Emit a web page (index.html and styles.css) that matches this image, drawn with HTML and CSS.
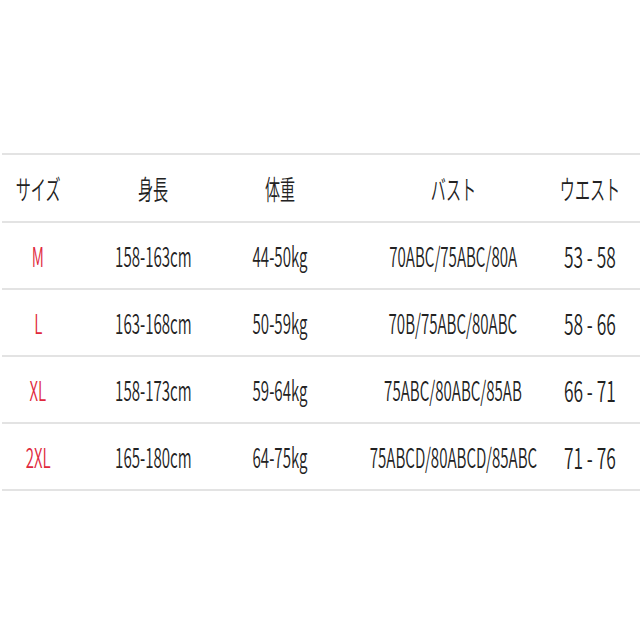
FILE: index.html
```html
<!DOCTYPE html>
<html lang="ja">
<head>
<meta charset="utf-8">
<title>サイズ表</title>
<link rel="stylesheet" href="styles.css">
</head>
<body>
<div class="size-table">
  <div class="row head">
    <div class="cell"><span class="txt">サイズ</span></div>
    <div class="cell"><span class="txt">身長</span></div>
    <div class="cell"><span class="txt">体重</span></div>
    <div class="cell"><span class="txt">バスト</span></div>
    <div class="cell"><span class="txt">ウエスト</span></div>
    <div class="cell"></div>
  </div>
  <div class="row">
    <div class="cell"><span class="txt size">M</span></div>
    <div class="cell"><span class="txt">158-163cm</span></div>
    <div class="cell"><span class="txt">44-50kg</span></div>
    <div class="cell"><span class="txt bust">70ABC/75ABC/80A</span></div>
    <div class="cell"><span class="txt waist">53 - 58</span></div>
    <div class="cell"></div>
  </div>
  <div class="row">
    <div class="cell"><span class="txt size">L</span></div>
    <div class="cell"><span class="txt">163-168cm</span></div>
    <div class="cell"><span class="txt">50-59kg</span></div>
    <div class="cell"><span class="txt bust">70B/75ABC/80ABC</span></div>
    <div class="cell"><span class="txt waist">58 - 66</span></div>
    <div class="cell"></div>
  </div>
  <div class="row">
    <div class="cell"><span class="txt size">XL</span></div>
    <div class="cell"><span class="txt">158-173cm</span></div>
    <div class="cell"><span class="txt">59-64kg</span></div>
    <div class="cell"><span class="txt bust">75ABC/80ABC/85AB</span></div>
    <div class="cell"><span class="txt waist">66 - 71</span></div>
    <div class="cell"></div>
  </div>
  <div class="row last">
    <div class="cell"><span class="txt size">2XL</span></div>
    <div class="cell"><span class="txt">165-180cm</span></div>
    <div class="cell"><span class="txt">64-75kg</span></div>
    <div class="cell"><span class="txt bust">75ABCD/80ABCD/85ABC</span></div>
    <div class="cell"><span class="txt waist">71 - 76</span></div>
    <div class="cell"></div>
  </div>
</div>
</body>
</html>
```
FILE: styles.css
```css
html, body {
  margin: 0;
  padding: 0;
  background: #ffffff;
}
body {
  width: 640px;
  height: 640px;
  overflow: hidden;
  font-family: "Noto Sans CJK JP", "Noto Sans", sans-serif;
  color: #222222;
}
.size-table {
  padding-top: 153px;
  padding-left: 2px;
}
.row {
  display: grid;
  grid-template-columns: 72px 158px 96px 250px 24px 38px;
  height: 65px;
  border-top: 2px solid #e3e3e3;
}
.row.head {
  height: 66px;
}
.row.last {
  border-bottom: 2px solid #e3e3e3;
}
.cell {
  display: flex;
  justify-content: center;
  align-items: center;
}
.txt {
  flex-shrink: 0;
  white-space: nowrap;
  font-size: 27px;
  font-weight: 350;
  line-height: 1;
  transform: scaleX(0.56);
  transform-origin: center;
}
.waist {
  font-size: 28px;
  transform: scaleX(0.62);
}
.size {
  color: #e0283c;
}
```
